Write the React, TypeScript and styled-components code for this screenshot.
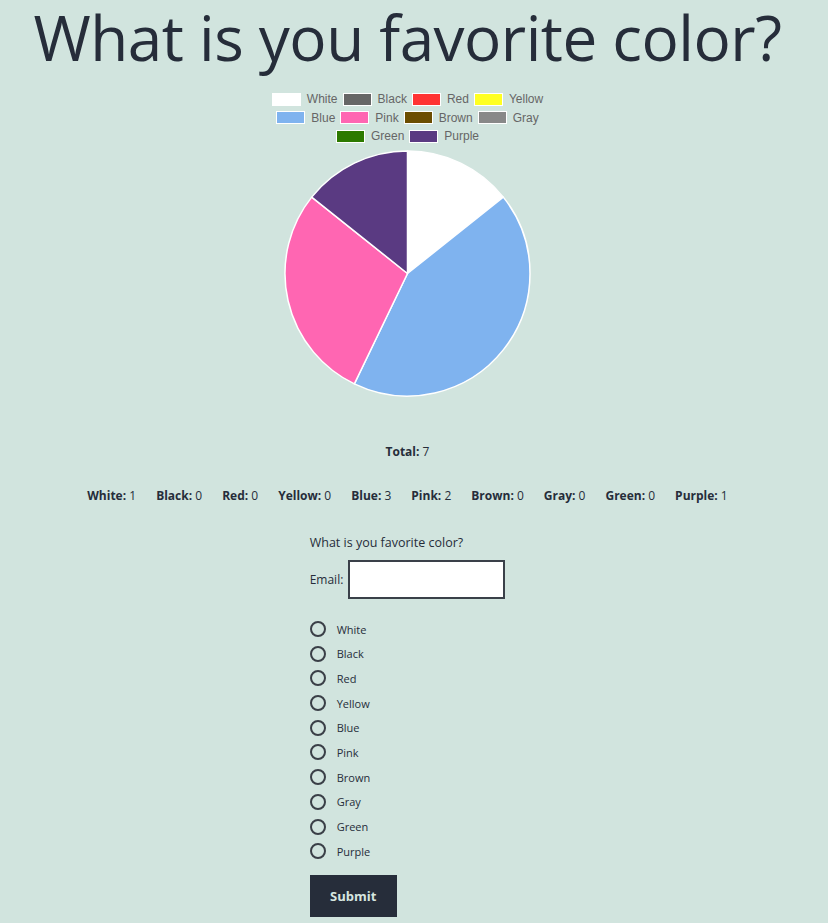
import React from "react";
import styled, { createGlobalStyle } from "styled-components";

const GlobalStyle = createGlobalStyle`
  html, body { margin: 0; padding: 0; background: #d1e4de; }
  body { font-family: "Open Sans", "Noto Sans", sans-serif; color: #262d3a; }
`;

type Color = { name: string; fill: string; count: number };

const COLORS: Color[] = [
  { name: "White", fill: "#ffffff", count: 1 },
  { name: "Black", fill: "#666666", count: 0 },
  { name: "Red", fill: "#ff3333", count: 0 },
  { name: "Yellow", fill: "#ffff22", count: 0 },
  { name: "Blue", fill: "#7fb3ef", count: 3 },
  { name: "Pink", fill: "#ff66b2", count: 2 },
  { name: "Brown", fill: "#6b4d00", count: 0 },
  { name: "Gray", fill: "#888888", count: 0 },
  { name: "Green", fill: "#2d7a00", count: 0 },
  { name: "Purple", fill: "#5a3a82", count: 1 },
];

const LEGEND_ROWS = [
  ["White", "Black", "Red", "Yellow"],
  ["Blue", "Pink", "Brown", "Gray"],
  ["Green", "Purple"],
];

const Page = styled.div`
  display: flex;
  flex-direction: column;
  align-items: center;
  padding-right: 13px;
`;

const Title = styled.h1`
  margin: 0;
  font-size: 62px;
  font-weight: 400;
  line-height: 74px;
  letter-spacing: -0.5px;
  color: #262d3a;
`;

const Chart = styled.div`
  display: flex;
  flex-direction: column;
  align-items: center;
  margin-top: 19px;
`;

const Legend = styled.div`
  display: flex;
  flex-direction: column;
  align-items: center;
  gap: 6.5px;
  font-family: "Liberation Sans", Arial, sans-serif;
  font-size: 12px;
  color: #666666;
`;

const LegendRow = styled.div`
  display: flex;
  gap: 5px;
  height: 12px;
  align-items: center;
`;

const LegendItem = styled.div`
  display: flex;
  align-items: center;
  gap: 6px;
  line-height: 12px;
`;

const Swatch = styled.span<{ $fill: string }>`
  display: inline-block;
  width: 27px;
  height: 11px;
  background: ${(p) => p.$fill};
  border: 1px solid #ffffff;
`;

const PieSvg = styled.svg`
  display: block;
  margin-top: 8px;
`;

const Total = styled.div`
  margin-top: 46px;
  font-size: 12px;
`;

const Counts = styled.div`
  display: flex;
  gap: 20px;
  margin-top: 27px;
  font-size: 12px;
`;

const Bold = styled.b`
  font-weight: 700;
`;

const Form = styled.form`
  display: flex;
  flex-direction: column;
  align-items: flex-start;
  margin-top: 30px;
  font-size: 12.5px;
`;

const Question = styled.div`
  line-height: 18px;
`;

const EmailRow = styled.label`
  display: flex;
  align-items: center;
  gap: 5px;
  margin-top: 8px;
  font-size: 12px;
`;

const EmailInput = styled.input`
  box-sizing: border-box;
  width: 157px;
  height: 39px;
  border: 2px solid #3a4049;
  background: #ffffff;
  margin: 0;
`;

const Radios = styled.div`
  display: flex;
  flex-direction: column;
  margin-top: 22px;
  gap: 8.7px;
`;

const RadioRow = styled.label`
  display: flex;
  align-items: center;
  gap: 11px;
  font-size: 11px;
  height: 16px;
`;

const Radio = styled.input`
  appearance: none;
  -webkit-appearance: none;
  box-sizing: border-box;
  width: 16px;
  height: 16px;
  margin: 0;
  border: 2px solid #3a3f47;
  border-radius: 50%;
  background: transparent;
`;

const SubmitButton = styled.button`
  margin-top: 16px;
  width: 87px;
  height: 42px;
  border: none;
  background: #262d3a;
  color: #d6e6e0;
  font-family: "Open Sans", "Noto Sans", sans-serif;
  font-weight: 700;
  font-size: 13px;
`;

function Pie() {
  const r = 122.5;
  const c = 123.5;
  const total = COLORS.reduce((s, x) => s + x.count, 0);
  let acc = 0;
  const slices = COLORS.filter((x) => x.count > 0).map((x) => {
    const a0 = (acc / total) * Math.PI * 2;
    acc += x.count;
    const a1 = (acc / total) * Math.PI * 2;
    const p0 = [c + r * Math.sin(a0), c - r * Math.cos(a0)];
    const p1 = [c + r * Math.sin(a1), c - r * Math.cos(a1)];
    const large = a1 - a0 > Math.PI ? 1 : 0;
    const d = `M ${c} ${c} L ${p0[0]} ${p0[1]} A ${r} ${r} 0 ${large} 1 ${p1[0]} ${p1[1]} Z`;
    return <path key={x.name} d={d} fill={x.fill} stroke="#ffffff" strokeWidth={1.5} strokeLinejoin="round" />;
  });
  return (
    <PieSvg width={247} height={247} viewBox="0 0 247 247">
      {slices}
    </PieSvg>
  );
}

export default function App() {
  const total = COLORS.reduce((s, x) => s + x.count, 0);
  const byName = Object.fromEntries(COLORS.map((c) => [c.name, c]));
  return (
    <>
      <GlobalStyle />
      <Page>
        <Title>What is you favorite color?</Title>
        <Chart>
          <Legend>
            {LEGEND_ROWS.map((row, i) => (
              <LegendRow key={i}>
                {row.map((n) => (
                  <LegendItem key={n}>
                    <Swatch $fill={byName[n].fill} />
                    {n}
                  </LegendItem>
                ))}
              </LegendRow>
            ))}
          </Legend>
          <Pie />
        </Chart>
        <Total>
          <Bold>Total:</Bold> {total}
        </Total>
        <Counts>
          {COLORS.map((c) => (
            <span key={c.name}>
              <Bold>{c.name}:</Bold> {c.count}
            </span>
          ))}
        </Counts>
        <Form onSubmit={(e) => e.preventDefault()}>
          <Question>What is you favorite color?</Question>
          <EmailRow>
            Email: <EmailInput type="email" />
          </EmailRow>
          <Radios>
            {COLORS.map((c) => (
              <RadioRow key={c.name}>
                <Radio type="radio" name="color" value={c.name} />
                {c.name}
              </RadioRow>
            ))}
          </Radios>
          <SubmitButton type="submit">Submit</SubmitButton>
        </Form>
      </Page>
    </>
  );
}
